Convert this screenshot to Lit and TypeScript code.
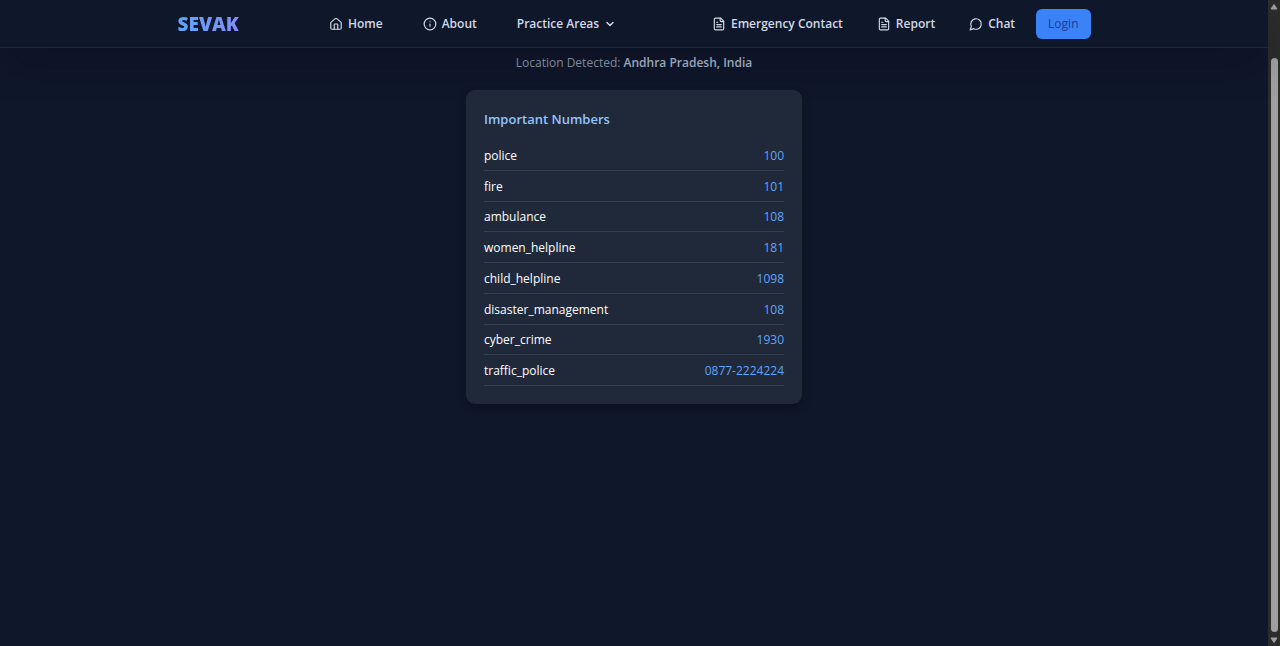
import { LitElement, html, css, svg } from "lit";
import { customElement } from "lit/decorators.js";

const icons = {
  home: svg`<path d="M3 10.2a2 2 0 0 1 .7-1.5l7-6a2 2 0 0 1 2.6 0l7 6a2 2 0 0 1 .7 1.5V19a2 2 0 0 1-2 2H5a2 2 0 0 1-2-2z"/><path d="M15 21v-8a1 1 0 0 0-1-1h-4a1 1 0 0 0-1 1v8"/>`,
  info: svg`<circle cx="12" cy="12" r="10"/><path d="M12 16v-4M12 8h.01"/>`,
  file: svg`<path d="M15 2H6a2 2 0 0 0-2 2v16a2 2 0 0 0 2 2h12a2 2 0 0 0 2-2V7z"/><path d="M14 2v4a2 2 0 0 0 2 2h4M10 9H8M16 13H8M16 17H8"/>`,
  chat: svg`<path d="M7.9 20A9 9 0 1 0 4 16.1L2 22z"/>`,
  chevron: svg`<path d="m6 9 6 6 6-6"/>`,
};

const icon = (name: keyof typeof icons) =>
  html`<svg class="icon ${name}" viewBox="0 0 24 24" aria-hidden="true">${icons[name]}</svg>`;

const numbers: [string, string][] = [
  ["police", "100"],
  ["fire", "101"],
  ["ambulance", "108"],
  ["women_helpline", "181"],
  ["child_helpline", "1098"],
  ["disaster_management", "108"],
  ["cyber_crime", "1930"],
  ["traffic_police", "0877-2224224"],
];

@customElement("app-root")
export class AppRoot extends LitElement {
  static styles = css`
    :host {
      display: flex;
      height: 100vh;
      overflow: hidden;
      background: #0f172a;
      color: #fff;
      font-family: "Segoe UI", "Open Sans", "Noto Sans", sans-serif;
      font-size: 12px;
      line-height: 18px;
    }
    * {
      box-sizing: border-box;
    }
    .page {
      flex: 1;
      min-width: 0;
      display: flex;
      flex-direction: column;
    }
    header {
      position: relative;
      z-index: 1;
      padding: 0 24px;
      border-bottom: 1px solid #1b2739;
      background: #0f172a;
      box-shadow: 0 20px 36px -10px rgba(14, 12, 30, 0.5);
    }
    .bar {
      display: flex;
      align-items: center;
      max-width: 913px;
      height: 47px;
      margin: 0 auto;
    }
    .logo {
      font-size: 19px;
      line-height: 24px;
      font-weight: 800;
      text-decoration: none;
      color: transparent;
      background: linear-gradient(90deg, #60a5fa, #818cf8);
      -webkit-background-clip: text;
      background-clip: text;
    }
    .links,
    .actions {
      display: flex;
      align-items: center;
    }
    .links {
      gap: 40px;
      margin: 0 auto 0 90px;
    }
    .actions {
      gap: 34px;
    }
    .item {
      display: flex;
      align-items: center;
      gap: 5px;
      padding: 0;
      border: 0;
      background: none;
      color: #d1d9e6;
      font: inherit;
      font-weight: 600;
      text-decoration: none;
      white-space: nowrap;
    }
    .icon {
      width: 14px;
      height: 14px;
      fill: none;
      stroke: currentColor;
      stroke-width: 2;
      stroke-linecap: round;
      stroke-linejoin: round;
    }
    .chevron {
      width: 12px;
      height: 12px;
      stroke-width: 3;
    }
    .login {
      height: 30px;
      margin-left: 21px;
      padding: 0 12px;
      border: 0;
      border-radius: 6px;
      background: #3b82f6;
      color: #1e3a9a;
      font: inherit;
    }
    main {
      display: flex;
      flex-direction: column;
      align-items: center;
      padding: 6px 16px;
      gap: 18px;
    }
    .location {
      position: relative;
      z-index: 2;
      margin: 0;
      color: #7d899d;
    }
    .location strong {
      font-weight: 600;
      color: #9aa5b8;
    }
    .card {
      display: flex;
      flex-direction: column;
      gap: 10px;
      width: 100%;
      max-width: 336px;
      min-height: 314px;
      padding: 18px;
      border-radius: 9px;
      background: #1f293a;
      box-shadow: 0 4px 8px rgba(0, 0, 0, 0.25);
      position: relative;
      z-index: 2;
    }
    h2 {
      margin: 0;
      font-size: 13px;
      line-height: 22px;
      font-weight: 600;
      color: #93c5fd;
    }
    dl {
      flex: 1;
      display: grid;
      grid-auto-rows: 1fr;
      margin: 0;
    }
    .row {
      display: flex;
      align-items: center;
      justify-content: space-between;
      padding-top: 2px;
      border-bottom: 1px solid #343f4f;
    }
    dd {
      margin: 0;
    }
    .phone {
      color: #60a5fa;
      text-decoration: none;
    }
    .scroll {
      display: flex;
      flex-direction: column;
      align-items: center;
      justify-content: space-between;
      width: 12px;
      padding: 3px 0 2px;
      background: #2c2c2c;
    }
    .arrow {
      width: 8px;
      height: 7px;
      fill: #9f9f9f;
      stroke: #9f9f9f;
      stroke-linejoin: round;
    }
    .thumb {
      flex: 1;
      width: 7px;
      margin: 48px 0 5px;
      border-radius: 4px;
      background: #9f9f9f;
    }
  `;

  render() {
    return html`
      <div class="page">
        <header>
          <div class="bar">
            <a class="logo" href="#">SEVAK</a>
            <nav class="links" aria-label="Main">
              <a class="item" href="#home">${icon("home")}Home</a>
              <a class="item" href="#about">${icon("info")}About</a>
              <button class="item" type="button" aria-haspopup="true">Practice Areas ${icon("chevron")}</button>
            </nav>
            <nav class="actions" aria-label="Services">
              <a class="item" href="#emergency">${icon("file")}Emergency Contact</a>
              <a class="item" href="#report">${icon("file")}Report</a>
              <a class="item" href="#chat">${icon("chat")}Chat</a>
            </nav>
            <button class="login" type="button">Login</button>
          </div>
        </header>
        <main>
          <p class="location">Location Detected: <strong>Andhra Pradesh, India</strong></p>
          <section class="card">
            <h2>Important Numbers</h2>
            <dl>
              ${numbers.map(
                ([name, phone]) => html`<div class="row">
                  <dt>${name}</dt>
                  <dd><a class="phone" href="tel:${phone}">${phone}</a></dd>
                </div>`
              )}
            </dl>
          </section>
        </main>
      </div>
      <div class="scroll" aria-hidden="true">
        <svg class="arrow" viewBox="0 0 8 7"><path d="M4 1.5 7 6H1z" /></svg>
        <div class="thumb"></div>
        <svg class="arrow" viewBox="0 0 8 7"><path d="M4 5.5 7 1H1z" /></svg>
      </div>
    `;
  }
}
